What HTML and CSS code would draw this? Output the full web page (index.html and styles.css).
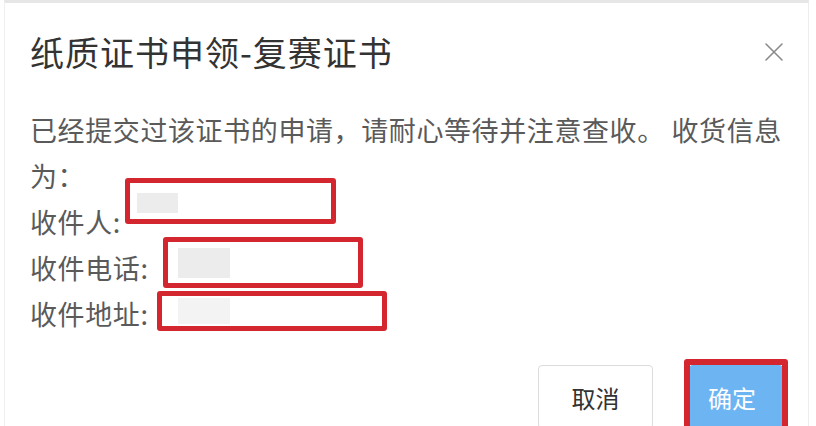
FILE: index.html
```html
<!DOCTYPE html>
<html lang="zh-CN">
<head>
  <meta charset="UTF-8" />
  <title>纸质证书申领-复赛证书</title>
  <link rel="stylesheet" href="styles.css">
</head>
<body>

  <div class="dialog">
    <div class="dialog-header">
      <h2 class="dialog-title">纸质证书申领-复赛证书</h2>
      <button class="close-btn" aria-label="关闭">
        <svg width="20" height="20" viewBox="0 0 20 20">
          <path d="M2 2 L18 18 M18 2 L2 18" stroke="#8a8a8a" stroke-width="1.6" fill="none" stroke-linecap="round"/>
        </svg>
      </button>
    </div>

    <div class="dialog-body">
      <p class="notice">已经提交过该证书的申请，请耐心等待并注意查收。 收货信息为：</p>
      <div class="row">
        <span class="label">收件人:</span>
        <span class="value">
          <span class="mark mark-name"><i class="blur"></i></span>
        </span>
      </div>
      <div class="row">
        <span class="label">收件电话:</span>
        <span class="value">
          <span class="mark mark-phone"><i class="blur"></i></span>
        </span>
      </div>
      <div class="row">
        <span class="label">收件地址:</span>
        <span class="value">
          <span class="mark mark-addr"><i class="blur"></i></span>
        </span>
      </div>
    </div>

    <div class="dialog-footer">
      <button class="btn btn-cancel">取消</button>
      <span class="confirm-wrap">
        <button class="btn btn-primary">确定</button>
        <span class="mark mark-btn"></span>
      </span>
    </div>
  </div>

</body>
</html>
```

FILE: styles.css
```css
:root {
  --title: #333;
  --text: #5a5a5a;
  --red: #d3262f;
  --blue: #6db4f2;
  --line: #e6e6e6;
}
* {
  box-sizing: border-box;
  margin: 0;
  padding: 0;
}
html, body {
  width: 100%;
  height: 100%;
  overflow: hidden;
}
body {
  background: #fff;
  font-family: "Noto Sans CJK SC", "Microsoft YaHei", sans-serif;
  color: var(--text);
}
.dialog {
  margin: 0 7px 0 4px;
  height: 100%;
  background: #fff;
  border-top: 3px solid var(--line);
  border-left: 1px solid #f0f0f0;
  border-right: 1px solid #ededed;
}
.dialog-header {
  display: flex;
  align-items: center;
  justify-content: space-between;
  padding: 26px 24px 0 25px;
}
.dialog-title {
  font-size: 34px;
  font-weight: normal;
  line-height: 46px;
  letter-spacing: 1px;
  color: var(--title);
}
.close-btn {
  background: none;
  border: none;
  width: 20px;
  height: 20px;
  display: flex;
  cursor: pointer;
}
.dialog-body {
  padding: 32px 2px 0 25px;
  font-size: 27px;
  line-height: 46px;
  letter-spacing: 0.6px;
}
.row {
  display: flex;
  height: 46px;
  white-space: nowrap;
}
.value {
  position: relative;
  width: 0;
  height: 46px;
}
.mark {
  position: absolute;
  border: 5px solid var(--red);
  border-radius: 3px;
}
.blur {
  position: absolute;
  background: #ececec;
}
.mark-name {
  left: 4px;
  top: -21px;
  width: 211px;
  height: 46px;
}
.mark-name .blur {
  left: 7px;
  top: 10px;
  width: 41px;
  height: 20px;
}
.mark-phone {
  left: 14px;
  top: -8px;
  width: 200px;
  height: 51px;
}
.mark-phone .blur {
  left: 10px;
  top: 6px;
  width: 52px;
  height: 30px;
}
.mark-addr {
  left: 8px;
  top: 0;
  width: 230px;
  height: 40px;
}
.mark-addr .blur {
  left: 16px;
  top: 2px;
  width: 52px;
  height: 26px;
  background: #f3f3f3;
}
.dialog-footer {
  display: flex;
  justify-content: flex-end;
  gap: 36px;
  padding: 28px 25px 0 0;
}
.btn {
  font-family: inherit;
  font-size: 24px;
  height: 64px;
  border-radius: 4px;
  cursor: pointer;
}
.btn-cancel {
  width: 115px;
  background: #fff;
  color: #333;
  border: 1px solid #dcdcdc;
}
.confirm-wrap {
  position: relative;
  display: flex;
}
.btn-primary {
  width: 94px;
  padding-right: 8px;
  background: var(--blue);
  color: #fff;
  border: none;
}
.mark-btn {
  left: -5px;
  top: -6px;
  width: 104px;
  height: 80px;
  border-width: 6px;
}
```
